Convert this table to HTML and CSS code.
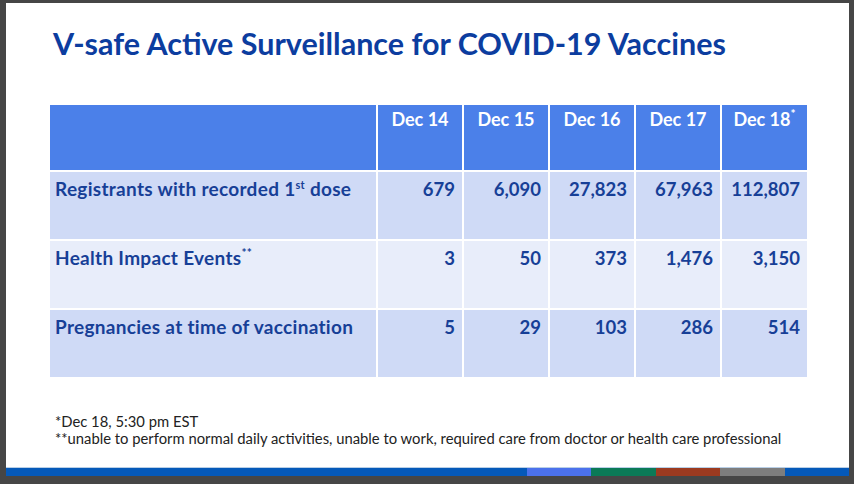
FILE: index.html
```html
<!DOCTYPE html>
<html lang="en">
<head>
<meta charset="utf-8">
<title>V-safe Active Surveillance for COVID-19 Vaccines</title>
<link rel="stylesheet" href="styles.css">
</head>
<body>
<div class="slide">
  <div class="content">
    <h1 class="title">V-safe Active Surveillance for COVID-19 Vaccines</h1>
    <table class="data">
      <colgroup>
        <col class="c-label"><col class="c-num"><col class="c-num"><col class="c-num"><col class="c-num"><col class="c-last">
      </colgroup>
      <thead>
        <tr class="head">
          <th></th>
          <th>Dec 14</th>
          <th>Dec 15</th>
          <th>Dec 16</th>
          <th>Dec 17</th>
          <th>Dec 18<sup class="ast">*</sup></th>
        </tr>
      </thead>
      <tbody>
        <tr class="dark">
          <td class="label">Registrants with recorded 1<sup class="ord">st</sup> dose</td>
          <td>679</td><td>6,090</td><td>27,823</td><td>67,963</td><td>112,807</td>
        </tr>
        <tr class="light">
          <td class="label">Health Impact Events<sup class="ast">**</sup></td>
          <td>3</td><td>50</td><td>373</td><td>1,476</td><td>3,150</td>
        </tr>
        <tr class="dark">
          <td class="label">Pregnancies at time of vaccination</td>
          <td>5</td><td>29</td><td>103</td><td>286</td><td>514</td>
        </tr>
      </tbody>
    </table>
    <div class="notes">
      <p>*Dec 18, 5:30 pm EST</p>
      <p>**unable to perform normal daily activities, unable to work, required care from doctor or health care professional</p>
    </div>
  </div>
  <div class="stripe">
    <span class="seg s-blue s-wide"></span>
    <span class="seg s-light"></span>
    <span class="seg s-green"></span>
    <span class="seg s-red"></span>
    <span class="seg s-gray"></span>
    <span class="seg s-blue"></span>
  </div>
</div>
</body>
</html>
```

FILE: styles.css
```css
html, body {
  margin: 0;
  padding: 0;
}
body {
  width: 854px;
  height: 484px;
  background: #464646;
  overflow: hidden;
  font-family: Lato, "Open Sans", "Liberation Sans", sans-serif;
}
.slide {
  margin: 3px 5px 0 6px;
  width: 843px;
  height: 473px;
  background: #ffffff;
  display: flex;
  flex-direction: column;
}
.content {
  flex: 1;
  display: flex;
  flex-direction: column;
}
.title {
  margin: 22px 0 0 47px;
  font-size: 30.5px;
  line-height: 36px;
  font-weight: 700;
  color: #0c3d9f;
  letter-spacing: 0;
}
.data {
  margin: 42px 0 0 42px;
  border-collapse: collapse;
  table-layout: fixed;
  width: 759px;
}
.c-label { width: 328px; }
.c-num { width: 86px; }
.c-last { width: 87px; }
.data th, .data td {
  border: 2px solid #ffffff;
  vertical-align: top;
  font-weight: 700;
  font-size: 18.5px;
  line-height: 22px;
  padding: 6px 7px 0 7px;
  color: #173f97;
  white-space: nowrap;
}
.data th {
  background: #4b80e9;
  color: #ffffff;
  text-align: center;
  font-size: 18px;
  padding-top: 3px;
}
.data td {
  text-align: right;
}
.data td.label {
  text-align: left;
  font-size: 19px;
  letter-spacing: 0.3px;
  padding-left: 5px;
}
.head { height: 67px; }
.dark { height: 69px; }
.light { height: 69px; }
.dark td { background: #cfdaf6; }
.light td { background: #e8edfa; }
.ord {
  font-size: 11px;
  line-height: 0;
  vertical-align: 7px;
}
.ast {
  font-size: 12px;
  line-height: 0;
  vertical-align: 8px;
}
.notes {
  margin: 34px 0 0 49px;
  color: #222222;
  font-size: 14.8px;
  line-height: 17px;
}
.notes p {
  margin: 0;
}
.stripe {
  height: 8px;
  border-top: 1px solid #b9cfe6;
  display: flex;
}
.seg {
  height: 8px;
  width: 64.5px;
}
.s-wide { flex: 1; }
.s-blue { background: #0559b9; }
.s-light { background: #4b71ec; }
.s-green { background: #0b7a57; }
.s-red { background: #9c3a20; }
.s-gray { background: #7e7e7e; }
```
